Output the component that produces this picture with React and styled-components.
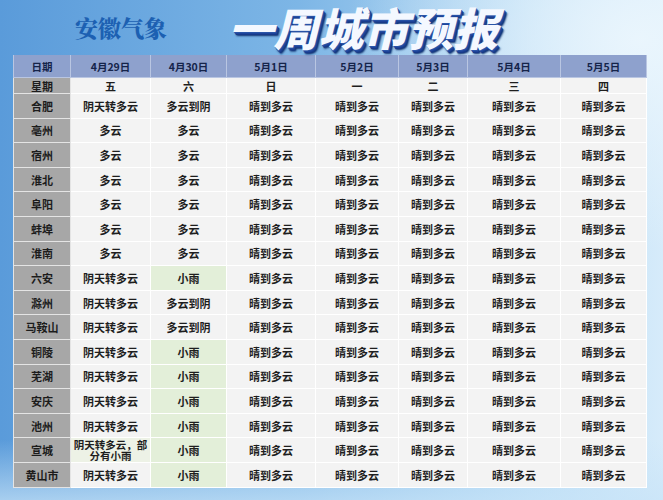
import React from "react";
import styled, { createGlobalStyle } from "styled-components";

const GlobalStyle = createGlobalStyle`
  html, body {
    margin: 0;
    padding: 0;
  }
  body {
    font-family: "Noto Sans CJK SC", "Noto Sans", sans-serif;
  }
`;

const dates = ["4月29日", "4月30日", "5月1日", "5月2日", "5月3日", "5月4日", "5月5日"];
const weekdays = ["五", "六", "日", "一", "二", "三", "四"];
const widths = [57, 80, 76, 89, 83, 69, 93, 86];

const SUNNY = "晴到多云";
const cities = [
  { name: "合肥", d1: "阴天转多云", d2: "多云到阴" },
  { name: "亳州", d1: "多云", d2: "多云" },
  { name: "宿州", d1: "多云", d2: "多云" },
  { name: "淮北", d1: "多云", d2: "多云" },
  { name: "阜阳", d1: "多云", d2: "多云" },
  { name: "蚌埠", d1: "多云", d2: "多云" },
  { name: "淮南", d1: "多云", d2: "多云" },
  { name: "六安", d1: "阴天转多云", d2: "小雨", rain: true },
  { name: "滁州", d1: "阴天转多云", d2: "多云到阴" },
  { name: "马鞍山", d1: "阴天转多云", d2: "多云到阴" },
  { name: "铜陵", d1: "阴天转多云", d2: "小雨", rain: true },
  { name: "芜湖", d1: "阴天转多云", d2: "小雨", rain: true },
  { name: "安庆", d1: "阴天转多云", d2: "小雨", rain: true },
  { name: "池州", d1: "阴天转多云", d2: "小雨", rain: true },
  { name: "宣城", d1: "阴天转多云，部分有小雨", d2: "小雨", rain: true, wrap: true },
  { name: "黄山市", d1: "阴天转多云", d2: "小雨", rain: true },
];

export default function App() {
  return (
    <>
      <GlobalStyle />
      <Page>
        <TitleBar>
          <Brand>安徽气象</Brand>
          <BigTitle>一周城市预报</BigTitle>
        </TitleBar>
        <Table>
          <colgroup>
            {widths.map((w, i) => (
              <col key={i} style={{ width: w }} />
            ))}
          </colgroup>
          <thead>
            <tr>
              <HeadCell>日期</HeadCell>
              {dates.map((d) => (
                <HeadCell key={d}>{d}</HeadCell>
              ))}
            </tr>
          </thead>
          <tbody>
            <WeekRow>
              <NameCell>星期</NameCell>
              {weekdays.map((w) => (
                <Cell key={w}>{w}</Cell>
              ))}
            </WeekRow>
            {cities.map((c) => (
              <CityRow key={c.name}>
                <NameCell>{c.name}</NameCell>
                <Cell $tint={c.wrap ? "faint" : ""} $wrap={c.wrap}>
                  {c.d1}
                </Cell>
                <Cell $tint={c.rain ? "rain" : ""}>{c.d2}</Cell>
                {[0, 1, 2, 3, 4].map((i) => (
                  <Cell key={i}>{SUNNY}</Cell>
                ))}
              </CityRow>
            ))}
          </tbody>
        </Table>
      </Page>
    </>
  );
}

const Page = styled.div`
  width: 663px;
  height: 500px;
  overflow: hidden;
  display: flex;
  flex-direction: column;
  background:
    radial-gradient(ellipse 420px 300px at 640px 40px, rgba(235, 246, 253, 0.95), rgba(235, 246, 253, 0) 70%),
    linear-gradient(180deg, rgba(255, 255, 255, 0) 0%, rgba(255, 255, 255, 0) 88%, rgba(200, 228, 248, 0.7) 100%),
    linear-gradient(90deg, #5a9bda 0%, #7db6e6 45%, #b9dcf5 80%, #d6ebfa 100%);
`;

const TitleBar = styled.div`
  height: 55px;
  display: flex;
  align-items: flex-start;
  padding-left: 75px;
  box-sizing: border-box;
`;

const Brand = styled.div`
  font-family: "Noto Serif CJK SC", "Noto Sans CJK SC", serif;
  font-weight: 900;
  font-size: 23px;
  line-height: 26px;
  margin-top: 15px;
  color: #1c60b2;
`;

const BigTitle = styled.div`
  margin-left: 56px;
  padding: 0 10px;
  white-space: nowrap;
  font-family: "Noto Sans CJK SC", sans-serif;
  font-weight: 900;
  font-size: 45px;
  line-height: 53px;
  letter-spacing: 0px;
  color: #f4f8ff;
  transform: skewX(-14deg);
  text-shadow: 1px 1px 0 #2a55a8, 2px 2px 0 #1e449a, 3px 3px 0 #173a8a, 4px 4px 2px #10306e;
`;

const Table = styled.table`
  margin-left: 13px;
  width: 633px;
  table-layout: fixed;
  border-collapse: collapse;
  font-size: 11px;
  color: #1e1e1e;
`;

const HeadCell = styled.th`
  height: 22px;
  padding: 0;
  background: #8ea1cd;
  border: 1px solid #b9c6e2;
  border-top: none;
  font-weight: 700;
  font-size: 10.5px;
  color: #15244a;
  text-align: center;
`;

const WeekRow = styled.tr`
  height: 16px;
  td {
    line-height: 14px;
  }
`;

const CityRow = styled.tr`
  height: 24.6px;
`;

const NameCell = styled.td`
  padding: 0;
  background: #a7a7a7;
  border: 1px solid #e4e4e4;
  text-align: center;
  font-weight: 700;
  color: #1c1c1c;
`;

const Cell = styled.td`
  background: ${(p) => (p.$tint === "rain" ? "#e3efd9" : p.$tint === "faint" ? "#edf2e6" : "#f3f3f3")};
  border: 1px solid #ffffff;
  text-align: center;
  font-weight: 700;
  font-size: ${(p) => (p.$wrap ? "10.5px" : "11px")};
  line-height: ${(p) => (p.$wrap ? "11px" : "normal")};
  padding: ${(p) => (p.$wrap ? "0 2px" : "0")};
`;
